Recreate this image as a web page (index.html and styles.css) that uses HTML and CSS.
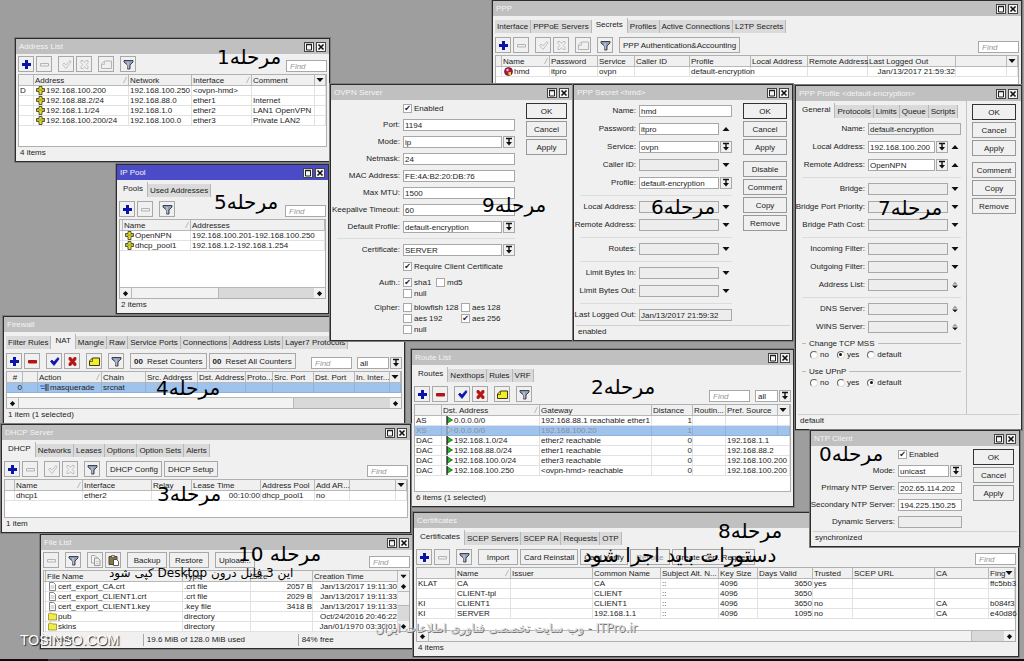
FILE: index.html
```
<!DOCTYPE html>
<html lang="en">
<head>
	<meta charset="utf-8">
	<title>WinBox - OpenVPN setup</title>
	<link rel="stylesheet" href="styles.css">
</head>
<body>

<!-- icons -->
<svg class="defs" width="0" height="0">
	<symbol id="plus" viewBox="0 0 11 11"><path d="M4 1h3v3h3v3H7v3H4V7H1V4h3z" fill="currentColor"/></symbol>
	<symbol id="minus" viewBox="0 0 11 11"><path d="M1.500 4.500h8v2.500h-8z" fill="var(--fill)" stroke="currentColor"/></symbol>
	<symbol id="check" viewBox="0 0 11 11"><path d="M1.500 5.500L3 4l1.800 2L9 1.500l1 1.500-5 6.500z" fill="var(--fill)" stroke="currentColor" stroke-width=".8"/></symbol>
	<symbol id="cross" viewBox="0 0 11 11"><path d="M2 1.500h2L5.500 3.500 7 1.500h2v2L7.300 5.500 9 7.500v2H7L5.500 7.500 4 9.500H2v-2l1.700-2L2 3.500z" fill="var(--fill)" stroke="currentColor" stroke-width=".8"/></symbol>
	<symbol id="note" viewBox="0 0 11 11"><path d="M.5 9.500V5l3-3h7v7.500z" fill="var(--note)" stroke="currentColor"/><path d="M.5 5.500h3V2" fill="none" stroke="currentColor" stroke-width=".7"/></symbol>
	<symbol id="funnel" viewBox="0 0 11 11"><path d="M1 1.500h9v1.500L7 6v4H4.500V6L1 3z" fill="#8d9bbd" stroke="#333" stroke-width=".9"/><path d="M5 3v6.500" stroke="#e3e8f4" stroke-width=".8"/></symbol>
	<symbol id="copy" viewBox="0 0 11 11"><path d="M1.500.5h3.500l2 2v5.500H1.500z" fill="#f3f3f3" stroke="#aaa"/><path d="M4.500 3h3.500l2 2v5.500H4.500z" fill="#eee" stroke="#999"/><path d="M6 6.500h2.500M6 8.500h2.500" stroke="#bbb" stroke-width=".7"/></symbol>
	<symbol id="paste" viewBox="0 0 11 11"><path d="M1 1.500h8v8H1z" fill="#8a7440" stroke="#444"/><path d="M3.500.5h3v2h-3z" fill="#ddd" stroke="#444" stroke-width=".7"/><path d="M5.500 4.500h3l2 2v4h-5z" fill="#fff" stroke="#333" stroke-width=".8"/></symbol>
	<symbol id="max" viewBox="0 0 8 8"><path d="M1.500 1v6h5V1" fill="none" stroke="#222"/><path d="M1 1.500h6" stroke="#222" stroke-width="1.500"/></symbol>
	<symbol id="close" viewBox="0 0 8 8"><path d="M1.500 1.500l5 5m0-5l-5 5" stroke="#111" stroke-width="1.600"/></symbol>
	<symbol id="pick" viewBox="0 0 10 10"><path d="M2 1.500h6M5 2v4" stroke="#111" stroke-width="1.400"/><path d="M2 5h6L5 8.500z" fill="#111"/></symbol>
	<symbol id="down" viewBox="0 0 8 8"><path d="M.5 2h7L4 6z" fill="#111"/></symbol>
	<symbol id="up" viewBox="0 0 8 8"><path d="M.5 6h7L4 2z" fill="#111"/></symbol>
	<symbol id="updown" viewBox="0 0 8 10"><path d="M.5 4.500h7L4 1z" fill="#999"/><path d="M.5 5.500h7L4 9z" fill="#111"/></symbol>
	<symbol id="sort" viewBox="0 0 6 8"><path d="M1.500 7L4.500 1" stroke="#aaa" stroke-width=".8"/></symbol>
	<symbol id="diamond" viewBox="0 0 8 8"><path d="M4 1l3 3-3 3-3-3z" fill="#111"/></symbol>
	<symbol id="addr" viewBox="0 0 9 9"><path d="M3 .5h3v2h2.500v3H6v3H3v-3H.5v-3H3z" fill="#e8e020" stroke="#444" stroke-width=".9"/><path d="M1 4h7" stroke="#6b6b10" stroke-width=".7"/></symbol>
	<symbol id="flag" viewBox="0 0 7 9"><path d="M1 0v9" stroke="currentColor" stroke-width="1.300"/><path d="M1.500 1l5 3-5 3z" fill="var(--flag)" stroke="currentColor" stroke-width=".6"/></symbol>
	<symbol id="file" viewBox="0 0 8 9"><path d="M1 .5h4l2 2v6H1z" fill="#fff" stroke="#666" stroke-width=".8"/><path d="M2 4h4M2 6h4" stroke="#999" stroke-width=".7"/></symbol>
	<symbol id="folder" viewBox="0 0 9 9"><path d="M.5 8V2l1-1h2l1 1h4v6z" fill="#f2ec4a" stroke="#8f8a2a" stroke-width=".8"/></symbol>
	<symbol id="masq" viewBox="0 0 9 9"><path d="M0 3h5M1 5.500h4" stroke="#2a62c4" stroke-width="1.200"/><path d="M6 1v7" stroke="#111"/><path d="M8 1v7" stroke="#555" stroke-width="1.200"/></symbol>
	<symbol id="person" viewBox="0 0 9 9"><circle cx="4.500" cy="4.500" r="4" fill="#b01848" stroke="#5a0a24" stroke-width=".7"/><circle cx="3.500" cy="3" r="1.200" fill="#f0c8d0"/><path d="M4.500 5h2.500v3H4.500z" fill="#e8d020"/></symbol>
</svg>

<main class="desktop">

	<!-- PPP -->
	<section class="win ppp">
		<header><h2>PPP</h2><button title="Maximize"><svg><use href="#max"/></svg></button><button title="Close"><svg><use href="#close"/></svg></button></header>
		<nav class="tabs"><button>Interface</button><button>PPPoE Servers</button><button class="on">Secrets</button><button>Profiles</button><button>Active Connections</button><button>L2TP Secrets</button></nav>
		<div class="bar">
			<button class="ico blue" title="Add"><svg><use href="#plus"/></svg></button>
			<button class="ico off" title="Remove"><svg><use href="#minus"/></svg></button>
			<button class="ico off sep" title="Enable"><svg><use href="#check"/></svg></button>
			<button class="ico off" title="Disable"><svg><use href="#cross"/></svg></button>
			<button class="ico off sep" title="Comment"><svg><use href="#note"/></svg></button>
			<button class="ico sep" title="Filter"><svg><use href="#funnel"/></svg></button>
			<button class="txt sep">PPP Authentication&amp;Accounting</button>
			<input class="find" placeholder="Find" aria-label="Find">
		</div>
		<div class="grid">
			<table>
				<colgroup><col width="6"><col width="48"><col width="48"><col width="37"><col width="55"><col width="61"><col width="57"><col width="60"><col width="88"><col><col width="11"></colgroup>
				<tr><th></th><th>Name<svg class="sort"><use href="#sort"/></svg></th><th>Password</th><th>Service</th><th>Caller ID</th><th>Profile</th><th>Local Address</th><th>Remote Address</th><th>Last Logged Out</th><th></th><th><svg class="tri"><use href="#down"/></svg></th></tr>
				<tr><td></td><td class="ic"><svg><use href="#person"/></svg>hmd</td><td>itpro</td><td>ovpn</td><td></td><td>default-encryption</td><td></td><td></td><td class="r">Jan/13/2017 21:59:32</td><td></td><td></td></tr>
			</table>
		</div>
	</section>

	<!-- Address List -->
	<section class="win address">
		<header><h2>Address List</h2><button title="Maximize"><svg><use href="#max"/></svg></button><button title="Close"><svg><use href="#close"/></svg></button></header>
		<div class="bar">
			<button class="ico blue" title="Add"><svg><use href="#plus"/></svg></button>
			<button class="ico off" title="Remove"><svg><use href="#minus"/></svg></button>
			<button class="ico off sep" title="Enable"><svg><use href="#check"/></svg></button>
			<button class="ico off" title="Disable"><svg><use href="#cross"/></svg></button>
			<button class="ico off sep" title="Comment"><svg><use href="#note"/></svg></button>
			<button class="ico sep" title="Filter"><svg><use href="#funnel"/></svg></button>
			<input class="find" placeholder="Find" aria-label="Find">
		</div>
		<div class="grid">
			<table>
				<colgroup><col width="15"><col width="95"><col width="63"><col width="60"><col><col width="11"></colgroup>
				<tr><th></th><th>Address<svg class="sort"><use href="#sort"/></svg></th><th>Network</th><th>Interface<svg class="sort"><use href="#sort"/></svg></th><th>Comment</th><th><svg class="tri"><use href="#down"/></svg></th></tr>
				<tr><td>D</td><td class="ic"><svg><use href="#addr"/></svg>192.168.100.200</td><td>192.168.100.250</td><td>&lt;ovpn-hmd&gt;</td><td></td><td></td></tr>
				<tr><td></td><td class="ic"><svg><use href="#addr"/></svg>192.168.88.2/24</td><td>192.168.88.0</td><td>ether1</td><td>Internet</td><td></td></tr>
				<tr><td></td><td class="ic"><svg><use href="#addr"/></svg>192.168.1.1/24</td><td>192.168.1.0</td><td>ether2</td><td>LAN1 OpenVPN</td><td></td></tr>
				<tr><td></td><td class="ic"><svg><use href="#addr"/></svg>192.168.100.200/24</td><td>192.168.100.0</td><td>ether3</td><td>Private LAN2</td><td></td></tr>
			</table>
		</div>
		<footer>4 items</footer>
	</section>

	<!-- Firewall -->
	<section class="win firewall">
		<header><h2>Firewall</h2><button title="Maximize"><svg><use href="#max"/></svg></button><button title="Close"><svg><use href="#close"/></svg></button></header>
		<nav class="tabs"><button>Filter Rules</button><button class="on">NAT</button><button>Mangle</button><button>Raw</button><button>Service Ports</button><button>Connections</button><button>Address Lists</button><button>Layer7 Protocols</button></nav>
		<div class="bar">
			<button class="ico blue" title="Add"><svg><use href="#plus"/></svg></button>
			<button class="ico red" title="Remove"><svg><use href="#minus"/></svg></button>
			<button class="ico blue sep" title="Enable"><svg><use href="#check"/></svg></button>
			<button class="ico red" title="Disable"><svg><use href="#cross"/></svg></button>
			<button class="ico yellow sep" title="Comment"><svg><use href="#note"/></svg></button>
			<button class="ico sep" title="Filter"><svg><use href="#funnel"/></svg></button>
			<button class="txt sep"><b>00</b> Reset Counters</button>
			<button class="txt"><b>00</b> Reset All Counters</button>
			<input class="find" placeholder="Find" aria-label="Find">
			<select class="chains" aria-label="Chain"><option>all</option></select>
			<button class="pick" title="Open"><svg><use href="#pick"/></svg></button>
		</div>
		<div class="grid">
			<table>
				<colgroup><col width="16"><col width="15"><col width="64"><col width="44"><col width="52"><col width="48"><col width="27"><col width="41"><col width="41"><col><col width="11"></colgroup>
				<tr><th class="num">#</th><th></th><th>Action<svg class="sort"><use href="#sort"/></svg></th><th>Chain</th><th>Src. Address</th><th>Dst. Address</th><th>Proto...</th><th>Src. Port</th><th>Dst. Port</th><th>In. Inter...</th><th><svg class="tri"><use href="#down"/></svg></th></tr>
				<tr class="sel"><td class="r">0</td><td></td><td class="ic"><svg><use href="#masq"/></svg>masquerade</td><td>srcnat</td><td></td><td></td><td></td><td></td><td></td><td></td><td></td></tr>
			</table>
			<div class="hscroll"><i><svg><use href="#diamond"/></svg></i><span></span><i><svg><use href="#diamond"/></svg></i></div>
		</div>
		<footer>1 item (1 selected)</footer>
	</section>

	<!-- IP Pool -->
	<section class="win pool active">
		<header><h2>IP Pool</h2><button title="Maximize"><svg><use href="#max"/></svg></button><button title="Close"><svg><use href="#close"/></svg></button></header>
		<nav class="tabs"><button class="on">Pools</button><button>Used Addresses</button></nav>
		<div class="bar">
			<button class="ico blue" title="Add"><svg><use href="#plus"/></svg></button>
			<button class="ico off" title="Remove"><svg><use href="#minus"/></svg></button>
			<button class="ico sep" title="Filter"><svg><use href="#funnel"/></svg></button>
			<input class="find" placeholder="Find" aria-label="Find">
		</div>
		<div class="grid">
			<table>
				<colgroup><col width="3"><col width="68"><col></colgroup>
				<tr><th></th><th>Name<svg class="sort"><use href="#sort"/></svg></th><th>Addresses</th></tr>
				<tr><td></td><td class="ic"><svg><use href="#addr"/></svg>OpenNPN</td><td>192.168.100.201-192.168.100.250</td></tr>
				<tr><td></td><td class="ic"><svg><use href="#addr"/></svg>dhcp_pool1</td><td>192.168.1.2-192.168.1.254</td></tr>
			</table>
			<div class="hscroll"><i><svg><use href="#diamond"/></svg></i><span></span><i><svg><use href="#diamond"/></svg></i></div>
		</div>
		<footer>2 items</footer>
	</section>

	<!-- OVPN Server -->
	<section class="win ovpn">
		<header><h2>OVPN Server</h2><button title="Maximize"><svg><use href="#max"/></svg></button><button title="Close"><svg><use href="#close"/></svg></button></header>
		<div class="dialog">
			<form>
				<div class="row"><span class="lb"></span><label class="ck"><input type="checkbox" checked>Enabled</label></div>
				<div class="row"><label class="lb" for="o-port">Port:</label><div class="ctl"><input id="o-port" value="1194"></div></div>
				<div class="row"><label class="lb" for="o-mode">Mode:</label><div class="ctl"><select id="o-mode"><option>ip</option></select><button type="button" class="pick" title="Open"><svg><use href="#pick"/></svg></button></div></div>
				<div class="row"><label class="lb" for="o-mask">Netmask:</label><div class="ctl"><input id="o-mask" value="24"></div></div>
				<div class="row"><label class="lb" for="o-mac">MAC Address:</label><div class="ctl"><input id="o-mac" value="FE:4A:B2:20:DB:76"></div></div>
				<div class="row"><label class="lb" for="o-mtu">Max MTU:</label><div class="ctl"><input id="o-mtu" value="1500"></div></div>
				<div class="row"><label class="lb" for="o-keep">Keepalive Timeout:</label><div class="ctl"><input id="o-keep" value="60"></div></div>
				<div class="row"><label class="lb" for="o-prof">Default Profile:</label><div class="ctl"><select id="o-prof"><option>default-encryption</option></select><button type="button" class="pick" title="Open"><svg><use href="#pick"/></svg></button></div></div>
				<hr>
				<div class="row"><label class="lb" for="o-cert">Certificate:</label><div class="ctl"><select id="o-cert"><option>SERVER</option></select><button type="button" class="pick" title="Open"><svg><use href="#pick"/></svg></button></div></div>
				<div class="row"><span class="lb"></span><label class="ck"><input type="checkbox" checked>Require Client Certificate</label></div>
				<div class="row tight"><span class="lb">Auth.:</span>
					<div class="cks auth"><label class="ck"><input type="checkbox" checked>sha1</label><label class="ck"><input type="checkbox">md5</label><label class="ck"><input type="checkbox">null</label></div>
				</div>
				<div class="row"><span class="lb">Cipher:</span>
					<div class="cks cipher"><label class="ck"><input type="checkbox">blowfish 128</label><label class="ck"><input type="checkbox">aes 128</label><label class="ck"><input type="checkbox">aes 192</label><label class="ck"><input type="checkbox" checked>aes 256</label><label class="ck"><input type="checkbox">null</label></div>
				</div>
			</form>
			<div class="acts"><button class="ok">OK</button><button>Cancel</button><button>Apply</button></div>
		</div>
	</section>

	<!-- PPP Secret -->
	<section class="win secret">
		<header><h2>PPP Secret &lt;hmd&gt;</h2><button title="Maximize"><svg><use href="#max"/></svg></button><button title="Close"><svg><use href="#close"/></svg></button></header>
		<div class="dialog">
			<form>
				<div class="row"><label class="lb" for="s-name">Name:</label><div class="ctl"><input id="s-name" value="hmd"></div></div>
				<div class="row"><label class="lb" for="s-pass">Password:</label><div class="ctl"><input id="s-pass" value="itpro"><svg class="tri"><use href="#up"/></svg></div></div>
				<div class="row"><label class="lb" for="s-serv">Service:</label><div class="ctl"><select id="s-serv"><option>ovpn</option></select><button type="button" class="pick" title="Open"><svg><use href="#pick"/></svg></button></div></div>
				<div class="row"><label class="lb" for="s-call">Caller ID:</label><div class="ctl"><input id="s-call" class="dim"><svg class="tri"><use href="#down"/></svg></div></div>
				<div class="row"><label class="lb" for="s-prof">Profile:</label><div class="ctl"><select id="s-prof"><option>default-encryption</option></select><button type="button" class="pick" title="Open"><svg><use href="#pick"/></svg></button></div></div>
				<hr>
				<div class="row"><label class="lb" for="s-loc">Local Address:</label><div class="ctl"><input id="s-loc" class="dim"><svg class="tri"><use href="#down"/></svg></div></div>
				<div class="row"><label class="lb" for="s-rem">Remote Address:</label><div class="ctl"><input id="s-rem" class="dim"><svg class="tri"><use href="#down"/></svg></div></div>
				<hr>
				<div class="row"><label class="lb" for="s-rts">Routes:</label><div class="ctl"><input id="s-rts" class="dim"><svg class="tri"><use href="#down"/></svg></div></div>
				<hr>
				<div class="row"><label class="lb" for="s-in">Limit Bytes In:</label><div class="ctl"><input id="s-in" class="dim"><svg class="tri"><use href="#down"/></svg></div></div>
				<div class="row"><label class="lb" for="s-out">Limit Bytes Out:</label><div class="ctl"><input id="s-out" class="dim"><svg class="tri"><use href="#down"/></svg></div></div>
				<hr>
				<div class="row"><label class="lb" for="s-last">Last Logged Out:</label><div class="ctl"><input id="s-last" class="dim" value="Jan/13/2017 21:59:32" readonly></div></div>
			</form>
			<div class="acts"><button class="ok">OK</button><button>Cancel</button><button>Apply</button><button class="sep">Disable</button><button>Comment</button><button>Copy</button><button>Remove</button></div>
		</div>
		<footer class="line">enabled</footer>
	</section>

	<!-- PPP Profile -->
	<section class="win profile">
		<header><h2>PPP Profile &lt;default-encryption&gt;</h2><button title="Maximize"><svg><use href="#max"/></svg></button><button title="Close"><svg><use href="#close"/></svg></button></header>
		<div class="dialog">
			<div class="pane">
				<nav class="tabs"><button class="on">General</button><button>Protocols</button><button>Limits</button><button>Queue</button><button>Scripts</button></nav>
				<form>
					<div class="row"><label class="lb" for="p-name">Name:</label><div class="ctl"><input id="p-name" class="dim" value="default-encryption"></div></div>
					<div class="row"><label class="lb" for="p-loc">Local Address:</label><div class="ctl"><select id="p-loc"><option>192.168.100.200</option></select><button type="button" class="pick" title="Open"><svg><use href="#pick"/></svg></button><svg class="tri"><use href="#up"/></svg></div></div>
					<div class="row"><label class="lb" for="p-rem">Remote Address:</label><div class="ctl"><select id="p-rem"><option>OpenNPN</option></select><button type="button" class="pick" title="Open"><svg><use href="#pick"/></svg></button><svg class="tri"><use href="#up"/></svg></div></div>
					<hr>
					<div class="row"><label class="lb" for="p-br">Bridge:</label><div class="ctl"><input id="p-br" class="dim"><svg class="tri"><use href="#down"/></svg></div></div>
					<div class="row"><label class="lb" for="p-pri">Bridge Port Priority:</label><div class="ctl"><input id="p-pri" class="dim"><svg class="tri"><use href="#down"/></svg></div></div>
					<div class="row"><label class="lb" for="p-cost">Bridge Path Cost:</label><div class="ctl"><input id="p-cost" class="dim"><svg class="tri"><use href="#down"/></svg></div></div>
					<hr>
					<div class="row"><label class="lb" for="p-in">Incoming Filter:</label><div class="ctl"><input id="p-in" class="dim"><svg class="tri"><use href="#down"/></svg></div></div>
					<div class="row"><label class="lb" for="p-out">Outgoing Filter:</label><div class="ctl"><input id="p-out" class="dim"><svg class="tri"><use href="#down"/></svg></div></div>
					<div class="row"><label class="lb" for="p-list">Address List:</label><div class="ctl"><input id="p-list" class="dim"><svg class="tri"><use href="#updown"/></svg></div></div>
					<hr>
					<div class="row"><label class="lb" for="p-dns">DNS Server:</label><div class="ctl"><input id="p-dns" class="dim"><svg class="tri"><use href="#updown"/></svg></div></div>
					<div class="row"><label class="lb" for="p-wins">WINS Server:</label><div class="ctl"><input id="p-wins" class="dim"><svg class="tri"><use href="#updown"/></svg></div></div>
					<fieldset><legend>Change TCP MSS</legend>
						<label class="ck"><input type="radio" name="mss">no</label><label class="ck"><input type="radio" name="mss" checked>yes</label><label class="ck"><input type="radio" name="mss">default</label>
					</fieldset>
					<fieldset><legend>Use UPnP</legend>
						<label class="ck"><input type="radio" name="upnp">no</label><label class="ck"><input type="radio" name="upnp">yes</label><label class="ck"><input type="radio" name="upnp" checked>default</label>
					</fieldset>
				</form>
			</div>
			<div class="acts"><button class="ok">OK</button><button>Cancel</button><button>Apply</button><button class="sep">Comment</button><button>Copy</button><button>Remove</button></div>
		</div>
		<footer class="line">default</footer>
	</section>

	<!-- Route List -->
	<section class="win route">
		<header><h2>Route List</h2><button title="Maximize"><svg><use href="#max"/></svg></button><button title="Close"><svg><use href="#close"/></svg></button></header>
		<nav class="tabs"><button class="on">Routes</button><button>Nexthops</button><button>Rules</button><button>VRF</button></nav>
		<div class="bar">
			<button class="ico blue" title="Add"><svg><use href="#plus"/></svg></button>
			<button class="ico red" title="Remove"><svg><use href="#minus"/></svg></button>
			<button class="ico blue sep" title="Enable"><svg><use href="#check"/></svg></button>
			<button class="ico red" title="Disable"><svg><use href="#cross"/></svg></button>
			<button class="ico yellow sep" title="Comment"><svg><use href="#note"/></svg></button>
			<button class="ico sep" title="Filter"><svg><use href="#funnel"/></svg></button>
			<input class="find" placeholder="Find" aria-label="Find">
			<select class="tables" aria-label="Table"><option>all</option></select>
			<button class="pick" title="Open"><svg><use href="#pick"/></svg></button>
		</div>
		<div class="grid">
			<table>
				<colgroup><col width="27"><col width="98"><col width="112"><col width="41"><col width="33"><col><col width="12"></colgroup>
				<tr><th></th><th>Dst. Address<svg class="sort"><use href="#sort"/></svg></th><th>Gateway</th><th>Distance</th><th>Routin...</th><th>Pref. Source</th><th><svg class="tri"><use href="#down"/></svg></th></tr>
				<tr><td>AS</td><td class="fl"><svg><use href="#flag"/></svg>0.0.0.0/0</td><td>192.168.88.1 reachable ether1</td><td class="r">1</td><td></td><td></td><td></td></tr>
				<tr class="sel gone"><td>XS</td><td class="fl"><svg><use href="#flag"/></svg>0.0.0.0/0</td><td>192.168.100.20</td><td class="r">1</td><td></td><td></td><td></td></tr>
				<tr><td>DAC</td><td class="fl"><svg><use href="#flag"/></svg>192.168.1.0/24</td><td>ether2 reachable</td><td class="r">0</td><td></td><td colspan="2">192.168.1.1</td></tr>
				<tr><td>DAC</td><td class="fl"><svg><use href="#flag"/></svg>192.168.88.0/24</td><td>ether1 reachable</td><td class="r">0</td><td></td><td colspan="2">192.168.88.2</td></tr>
				<tr><td>DAC</td><td class="fl"><svg><use href="#flag"/></svg>192.168.100.0/24</td><td>ether3 reachable</td><td class="r">0</td><td></td><td colspan="2">192.168.100.200</td></tr>
				<tr><td>DAC</td><td class="fl"><svg><use href="#flag"/></svg>192.168.100.250</td><td>&lt;ovpn-hmd&gt; reachable</td><td class="r">0</td><td></td><td colspan="2">192.168.100.200</td></tr>
			</table>
		</div>
		<footer>6 items (1 selected)</footer>
	</section>

	<!-- DHCP Server -->
	<section class="win dhcp">
		<header><h2>DHCP Server</h2><button title="Maximize"><svg><use href="#max"/></svg></button><button title="Close"><svg><use href="#close"/></svg></button></header>
		<nav class="tabs"><button class="on">DHCP</button><button>Networks</button><button>Leases</button><button>Options</button><button>Option Sets</button><button>Alerts</button></nav>
		<div class="bar">
			<button class="ico blue" title="Add"><svg><use href="#plus"/></svg></button>
			<button class="ico off" title="Remove"><svg><use href="#minus"/></svg></button>
			<button class="ico off sep" title="Enable"><svg><use href="#check"/></svg></button>
			<button class="ico off" title="Disable"><svg><use href="#cross"/></svg></button>
			<button class="ico sep" title="Filter"><svg><use href="#funnel"/></svg></button>
			<button class="txt sep">DHCP Config</button>
			<button class="txt">DHCP Setup</button>
			<input class="find" placeholder="Find" aria-label="Find">
		</div>
		<div class="grid">
			<table>
				<colgroup><col width="10"><col width="68"><col width="69"><col width="40"><col width="69"><col width="54"><col width="35"><col><col width="11"></colgroup>
				<tr><th></th><th>Name<svg class="sort"><use href="#sort"/></svg></th><th>Interface</th><th>Relay</th><th>Lease Time</th><th>Address Pool</th><th>Add AR...</th><th></th><th><svg class="tri"><use href="#down"/></svg></th></tr>
				<tr><td></td><td>dhcp1</td><td>ether2</td><td></td><td class="r">00:10:00</td><td>dhcp_pool1</td><td>no</td><td></td><td></td></tr>
			</table>
		</div>
		<footer>1 item</footer>
	</section>

	<!-- File List -->
	<section class="win files">
		<header><h2>File List</h2><button title="Maximize"><svg><use href="#max"/></svg></button><button title="Close"><svg><use href="#close"/></svg></button></header>
		<div class="bar">
			<button class="ico off" title="Remove"><svg><use href="#minus"/></svg></button>
			<button class="ico sep" title="Filter"><svg><use href="#funnel"/></svg></button>
			<button class="ico sep" title="Copy"><svg><use href="#copy"/></svg></button>
			<button class="ico" title="Paste"><svg><use href="#paste"/></svg></button>
			<button class="txt sep">Backup</button>
			<button class="txt">Restore</button>
			<button class="txt sep">Upload...</button>
			<input class="find" placeholder="Find" aria-label="Find">
		</div>
		<div class="grid side">
			<table>
				<colgroup><col width="2"><col width="137"><col width="68"><col width="62"><col></colgroup>
				<tr><th></th><th>File Name</th><th>Type</th><th>Size</th><th>Creation Time</th></tr>
				<tr><td></td><td class="fi"><svg><use href="#file"/></svg>cert_export_CA.crt</td><td>.crt file</td><td class="r">2057 B</td><td class="r">Jan/13/2017 19:11:30</td></tr>
				<tr><td></td><td class="fi"><svg><use href="#file"/></svg>cert_export_CLIENT1.crt</td><td>.crt file</td><td class="r">2029 B</td><td class="r">Jan/13/2017 19:11:33</td></tr>
				<tr><td></td><td class="fi"><svg><use href="#file"/></svg>cert_export_CLIENT1.key</td><td>.key file</td><td class="r">3418 B</td><td class="r">Jan/13/2017 19:11:33</td></tr>
				<tr><td></td><td class="fi"><svg><use href="#folder"/></svg>pub</td><td>directory</td><td></td><td class="r">Oct/24/2016 20:46:22</td></tr>
				<tr><td></td><td class="fi"><svg><use href="#folder"/></svg>skins</td><td>directory</td><td></td><td class="r">Jan/01/1970 03:30:01</td></tr>
			</table>
			<div class="vscroll"><i><svg><use href="#down"/></svg></i><i><svg><use href="#diamond"/></svg></i><span></span><i><svg><use href="#diamond"/></svg></i></div>
		</div>
		<footer class="parts"><span>5 items</span><span>19.6 MiB of 128.0 MiB used</span><span>84% free</span></footer>
	</section>

	<!-- Certificates -->
	<section class="win certs">
		<header><h2>Certificates</h2><button title="Maximize"><svg><use href="#max"/></svg></button><button title="Close"><svg><use href="#close"/></svg></button></header>
		<nav class="tabs"><button class="on">Certificates</button><button>SCEP Servers</button><button>SCEP RA</button><button>Requests</button><button>OTP</button></nav>
		<div class="bar">
			<button class="ico blue" title="Add"><svg><use href="#plus"/></svg></button>
			<button class="ico off" title="Remove"><svg><use href="#minus"/></svg></button>
			<button class="ico sep" title="Filter"><svg><use href="#funnel"/></svg></button>
			<button class="txt sep">Import</button>
			<button class="txt">Card Reinstall</button>
			<button class="txt">Card Verify</button>
			<button class="txt" disabled>Revoke</button>
			<button class="txt">Create Cert. Request</button>
			<input class="find" placeholder="Find" aria-label="Find">
		</div>
		<div class="grid">
			<table>
				<colgroup><col width="39"><col width="55"><col width="82"><col width="68"><col width="58"><col width="39"><col width="55"><col width="40"><col width="82"><col width="54"><col><col width="11"></colgroup>
				<tr><th></th><th>Name<svg class="sort"><use href="#sort"/></svg></th><th>Issuer</th><th>Common Name</th><th>Subject Alt. N...</th><th>Key Size</th><th>Days Valid</th><th>Trusted</th><th>SCEP URL</th><th>CA</th><th class="bare">Fing</th><th><svg class="tri"><use href="#down"/></svg></th></tr>
				<tr><td>KLAT</td><td>CA</td><td></td><td>CA</td><td>::</td><td>4096</td><td class="r">3650</td><td>yes</td><td></td><td></td><td colspan="2">ffc5bb3</td></tr>
				<tr><td></td><td>CLIENT-tpl</td><td></td><td>CLIENT</td><td>::</td><td>4096</td><td class="r">3650</td><td></td><td></td><td></td><td colspan="2"></td></tr>
				<tr><td>KI</td><td>CLIENT1</td><td></td><td>CLIENT1</td><td>::</td><td>4096</td><td class="r">3650</td><td>no</td><td></td><td>CA</td><td colspan="2">b084f3</td></tr>
				<tr><td>KI</td><td>SERVER</td><td></td><td>192.168.1.1</td><td>::</td><td>4096</td><td class="r">1095</td><td>no</td><td></td><td>CA</td><td colspan="2">e40d86</td></tr>
			</table>
			<div class="hscroll"><i><svg><use href="#diamond"/></svg></i><span></span><i><svg><use href="#diamond"/></svg></i></div>
		</div>
		<footer>4 items</footer>
	</section>

	<!-- NTP Client -->
	<section class="win ntp">
		<header><h2>NTP Client</h2><button title="Maximize"><svg><use href="#max"/></svg></button><button title="Close"><svg><use href="#close"/></svg></button></header>
		<div class="dialog">
			<form>
				<div class="row"><span class="lb"></span><label class="ck"><input type="checkbox" checked>Enabled</label></div>
				<div class="row"><label class="lb" for="n-mode">Mode:</label><div class="ctl"><select id="n-mode"><option>unicast</option></select><button type="button" class="pick" title="Open"><svg><use href="#pick"/></svg></button></div></div>
				<div class="row"><label class="lb" for="n-pri">Primary NTP Server:</label><div class="ctl"><input id="n-pri" value="202.65.114.202"></div></div>
				<div class="row"><label class="lb" for="n-sec">Secondary NTP Server:</label><div class="ctl"><input id="n-sec" value="194.225.150.25"></div></div>
				<div class="row"><label class="lb" for="n-dyn">Dynamic Servers:</label><div class="ctl"><input id="n-dyn" class="dim"></div></div>
			</form>
			<div class="acts"><button class="ok">OK</button><button>Cancel</button><button>Apply</button></div>
		</div>
		<footer class="line">synchronized</footer>
	</section>

	<!-- step captions over the windows -->
	<p class="step s0" dir="rtl">مرحله0</p>
	<p class="step s1" dir="rtl">مرحله1</p>
	<p class="step s2" dir="rtl">مرحله2</p>
	<p class="step s3" dir="rtl">مرحله3</p>
	<p class="step s4" dir="rtl">مرحله4</p>
	<p class="step s5" dir="rtl">مرحله5</p>
	<p class="step s6" dir="rtl">مرحله6</p>
	<p class="step s7" dir="rtl">مرحله7</p>
	<p class="step s8" dir="rtl">مرحله8</p>
	<p class="step s8b" dir="rtl">دستورات باید اجرا شود</p>
	<p class="step s9" dir="rtl">مرحله9</p>
	<p class="step s10" dir="rtl">مرحله 10</p>
	<p class="step s10b" dir="rtl">این 3 فایل درون Desktop کپی شود</p>

	<p class="mark tosinso">TOSINSO.COM</p>
	<p class="mark itpro" dir="rtl">ITPro.ir - وب سایت تخصصی فناوری اطلاعات ایران</p>
</main>
<div class="taskbar"><span></span></div>

</body>
</html>
```
FILE: styles.css
```
* {
	box-sizing: border-box;
}

body {
	margin: 0;
	height: 100vh;
	overflow: hidden;
	display: flex;
	flex-direction: column;
	background: #9e9e9e;
	color: #1c1c1c;
	font: 8px/9px "Liberation Sans", sans-serif;
}

.defs {
	position: absolute;
}

button, input, select {
	font: inherit;
	color: inherit;
	margin: 0;
	padding: 0;
	border: 1px solid #a8a8a8;
	border-radius: 0;
	background: #f0f0f0;
	appearance: none;
}

button {
	display: flex;
	align-items: center;
	justify-content: center;
	white-space: nowrap;
}

.desktop {
	position: relative;
	flex: 1;
	overflow: hidden;
}

.taskbar {
	height: 2px;
	background: #0c0c10;
	padding-left: 48px;
}

.taskbar span {
	display: block;
	width: 32px;
	height: 2px;
	background: #3a3a42;
}

/* windows */

.win {
	position: absolute;
	display: flex;
	flex-direction: column;
	padding: 0 2px 2px;
	background: #f0f0f0;
	border: 1px solid #2c2c2c;
	box-shadow: 0 0 0 1px #7d7d7d;
}

.ppp { left: 492px; top: 0; width: 530px; height: 129px; }
.address { left: 15px; top: 38px; width: 315px; height: 124px; }
.firewall { left: 3px; top: 316px; width: 402px; height: 108px; }
.pool { left: 116px; top: 164px; width: 213px; height: 150px; }
.ovpn { left: 330px; top: 84px; width: 243px; height: 257px; }
.secret { left: 573px; top: 84px; width: 220px; height: 257px; }
.profile { left: 795px; top: 85px; width: 227px; height: 345px; }
.route { left: 411px; top: 349px; width: 383px; height: 158px; }
.dhcp { left: 1px; top: 424px; width: 410px; height: 109px; }
.files { left: 40px; top: 534px; width: 373px; height: 115px; }
.certs { left: 413px; top: 512px; width: 606px; height: 145px; }
.ntp { left: 810px; top: 430px; width: 210px; height: 117px; }

.win header {
	flex: none;
	display: flex;
	align-items: center;
	gap: 2px;
	height: 15px;
	margin: 0 -2px;
	padding: 0 3px;
	background: #c0c0c0;
}

.active header {
	background: #4b4bc8;
}

.win h2 {
	flex: 1;
	margin: 0;
	color: #f4f4f4;
	font-size: 8px;
	font-weight: normal;
}

header button {
	width: 10px;
	height: 10px;
	background: #f4f4f4;
	border-color: #444;
}

header svg {
	width: 8px;
	height: 8px;
}

.tabs {
	flex: none;
	display: flex;
	align-items: flex-end;
	height: 15px;
	margin: 2px 0;
}

.tabs button {
	height: 13px;
	padding: 0 2px;
	background: #dadada;
	border-width: 0 1px 0 0;
	border-color: #b8b8b8;
}

.tabs .on {
	height: 15px;
	padding: 0 4px 2px;
	background: #f0f0f0;
}

/* toolbar */

.bar {
	flex: none;
	display: flex;
	gap: 2px;
	height: 16px;
	margin: 2px 0;
}

.bar .sep {
	margin-left: 4px;
}

.ico {
	width: 16px;
	--fill: currentColor;
}

.ico svg {
	width: 11px;
	height: 11px;
}

.blue { color: #0a14a8; }
.red { color: #b41414; }
.yellow { color: #3a3a10; --note: #f4ee28; }
.off { color: #b4b4b4; --fill: #f0f0f0; --note: #f0f0f0; }

.txt {
	min-width: 40px;
	padding: 0 3px;
}

.txt b {
	margin-right: 4px;
}

.txt:disabled {
	color: #999;
}

.find {
	align-self: flex-end;
	width: 41px;
	height: 12px;
	margin-left: auto;
	padding: 0 3px;
	background: #fff;
	font-style: italic;
}

.find::placeholder {
	color: #999;
}

.bar select {
	align-self: flex-end;
	height: 12px;
	margin-left: 3px;
	padding: 0 2px;
	background: #fff;
}

.chains { width: 32px; }
.tables { width: 23px; }

.pick {
	flex: none;
	align-self: flex-end;
	width: 12px;
	height: 12px;
}

.bar .pick {
	margin-left: -1px;
}

.pick svg {
	width: 10px;
	height: 10px;
}

/* lists */

.grid {
	flex: 1;
	min-height: 0;
	display: flex;
	flex-direction: column;
	justify-content: space-between;
	background: #fff;
	border: 1px solid #b0b0b0;
}

.side {
	flex-direction: row;
}

table {
	width: 100%;
	table-layout: fixed;
	border-collapse: separate;
	border-spacing: 0;
}

.side table {
	flex: 1;
	width: auto;
	align-self: flex-start;
}

th, td {
	height: 10px;
	padding: 0 0 0 1px;
	white-space: nowrap;
	text-align: left;
	font-weight: normal;
	line-height: 9px;
	border: solid #e2e2e2;
	border-width: 0 1px 1px 0;
}

th {
	height: 11px;
	background: #f0f0f0;
	border-color: #b8b8b8;
}

.bare {
	border-right-color: #f0f0f0;
}

.num {
	text-align: center;
}

.r {
	text-align: right;
}

td svg {
	width: 9px;
	height: 9px;
	margin-right: 1px;
	vertical-align: top;
}

.ic, .fi {
	padding-left: 2px;
}

.fl {
	padding-left: 4px;
	--flag: #18c818;
}

.fl svg {
	width: 7px;
}

.sel td {
	background: #9fc3ec;
	border-color: #8fb2da;
}

.gone td {
	color: #868e9a;
	--flag: #b9c4d2;
}

.sort {
	float: right;
	width: 6px;
	height: 8px;
}

.tri {
	flex: none;
	width: 8px;
	height: 8px;
}

th .tri {
	display: block;
}

.hscroll, .vscroll {
	flex: none;
	display: flex;
	background: #d9d9d9;
}

.hscroll {
	height: 11px;
	border-top: 1px solid #b8b8b8;
}

.vscroll {
	flex-direction: column;
	width: 11px;
}

.hscroll i, .vscroll i {
	flex: none;
	display: flex;
	align-items: center;
	justify-content: center;
	width: 11px;
	height: 10px;
	background: #f2f2f2;
}

.hscroll svg, .vscroll svg {
	width: 7px;
	height: 7px;
}

.hscroll span {
	background: #f2f2f2;
	border: solid #b8b8b8;
	border-width: 0 1px;
	margin-right: auto;
}

.vscroll span {
	height: 15px;
	margin-bottom: auto;
	background: #f2f2f2;
	border: solid #b8b8b8;
	border-width: 1px 0;
}

.pool .hscroll span { width: 43%; }
.firewall .hscroll span { width: 70%; }
.certs .hscroll span { width: 91%; }

footer {
	flex: none;
	height: 12px;
	padding: 0 2px;
	line-height: 12px;
}

.line {
	height: 13px;
	border-top: 1px solid #d0d0d0;
}

.parts {
	display: flex;
	margin-top: 2px;
	padding: 0;
}

.parts span {
	padding-left: 3px;
	border-left: 1px solid #a8a8a8;
}

.parts span:nth-child(1) { flex: 99; }
.parts span:nth-child(2) { flex: 156; }
.parts span:nth-child(3) { flex: 112; }

/* dialogs */

.dialog {
	flex: 1;
	display: flex;
	justify-content: space-between;
	padding-top: 3px;
}

.row {
	display: flex;
	gap: 3px;
	margin-bottom: 6px;
}

.ovpn .row, .ntp .row {
	margin-bottom: 5px;
}

.ovpn .tight {
	margin-bottom: 3px;
}

.dialog .row:last-child {
	margin-bottom: 0;
}

.lb {
	flex: none;
	display: flex;
	justify-content: flex-end;
	width: 67px;
	line-height: 12px;
	white-space: nowrap;
}

.ctl {
	display: flex;
	gap: 1px;
	width: 93px;
}

.ctl input, .ctl select {
	flex: 1;
	min-width: 0;
	height: 12px;
	padding: 0 1px;
	background: #fff;
}

.ctl .dim {
	background: #ededed;
}

.ctl .tri {
	width: 12px;
	height: 8px;
	align-self: center;
}

.secret form {
	padding-top: 2px;
}

.secret .lb {
	width: 60px;
}

.ovpn .ctl {
	width: 112px;
}

.ntp .lb {
	width: 82px;
}

.ntp .ctl {
	width: 64px;
}

form hr {
	height: 1px;
	margin: 0 0 5px 4px;
	border: 0;
	background: #dcdcdc;
}

.acts {
	display: flex;
	flex-direction: column;
	gap: 2px;
	width: 44px;
	margin: 0 3px;
}

.acts button {
	height: 16px;
	border-color: #999;
}

.acts .ok {
	border-color: #333;
}

.acts .sep {
	margin-top: 4px;
}

.ovpn .acts, .ntp .acts {
	width: 41px;
}

.ck {
	display: flex;
	align-items: center;
	gap: 2px;
	height: 11px;
	white-space: nowrap;
}

.ck input {
	flex: none;
	display: flex;
	align-items: center;
	justify-content: center;
	width: 9px;
	height: 9px;
	background: #fff;
}

.ck input:checked::before {
	content: "✔";
	font: 8px/8px "DejaVu Sans", sans-serif;
}

.ck input[type=radio] {
	width: 8px;
	height: 8px;
	border-color: #666 #ddd #ddd #666;
	border-radius: 50%;
}

.ck input[type=radio]:checked::before {
	content: "";
	width: 3px;
	height: 3px;
	border-radius: 50%;
	background: #111;
}

.cks {
	display: grid;
}

.auth { grid-template-columns: 33px 1fr; }
.cipher { grid-template-columns: 58px 1fr; }

.pane {
	width: 169px;
	margin-top: -3px;
	padding-right: 5px;
	border-right: 1px solid #c4c4c4;
}

.pane .tabs {
	margin-bottom: 5px;
}

fieldset {
	display: flex;
	gap: 8px;
	margin: 0 0 6px 4px;
	padding: 1px 8px;
	border: 0;
	border-top: 1px solid #bbb;
}

legend {
	margin-left: -4px;
	padding: 0 3px;
}

/* captions */

.step, .mark {
	position: absolute;
	margin: 0;
	white-space: nowrap;
}

.step {
	color: #000;
	font: 20px/24px "DejaVu Sans", sans-serif;
}

.s0 { left: 819px; top: 442px; }
.s1 { left: 217px; top: 45px; }
.s2 { left: 591px; top: 375px; }
.s3 { left: 157px; top: 482px; }
.s4 { left: 156px; top: 376px; }
.s5 { left: 214px; top: 190px; }
.s6 { left: 651px; top: 195px; }
.s7 { left: 878px; top: 196px; }
.s8 { left: 718px; top: 519px; }
.s8b { left: 583px; top: 543px; }
.s9 { left: 482px; top: 193px; }
.s10 { left: 238px; top: 542px; }

.s10b {
	left: 109px;
	top: 561px;
	font-size: 12px;
}

.tosinso {
	left: 20px;
	top: 632px;
	color: #fff;
	font: 14px/16px "Liberation Sans", sans-serif;
	text-shadow: 1px 1px 1px #222;
}

.itpro {
	left: 375px;
	top: 620px;
	color: #d8d8d8;
	font: 12px/16px "DejaVu Sans", sans-serif;
	text-shadow: 1px 1px 0 #777;
}
```
